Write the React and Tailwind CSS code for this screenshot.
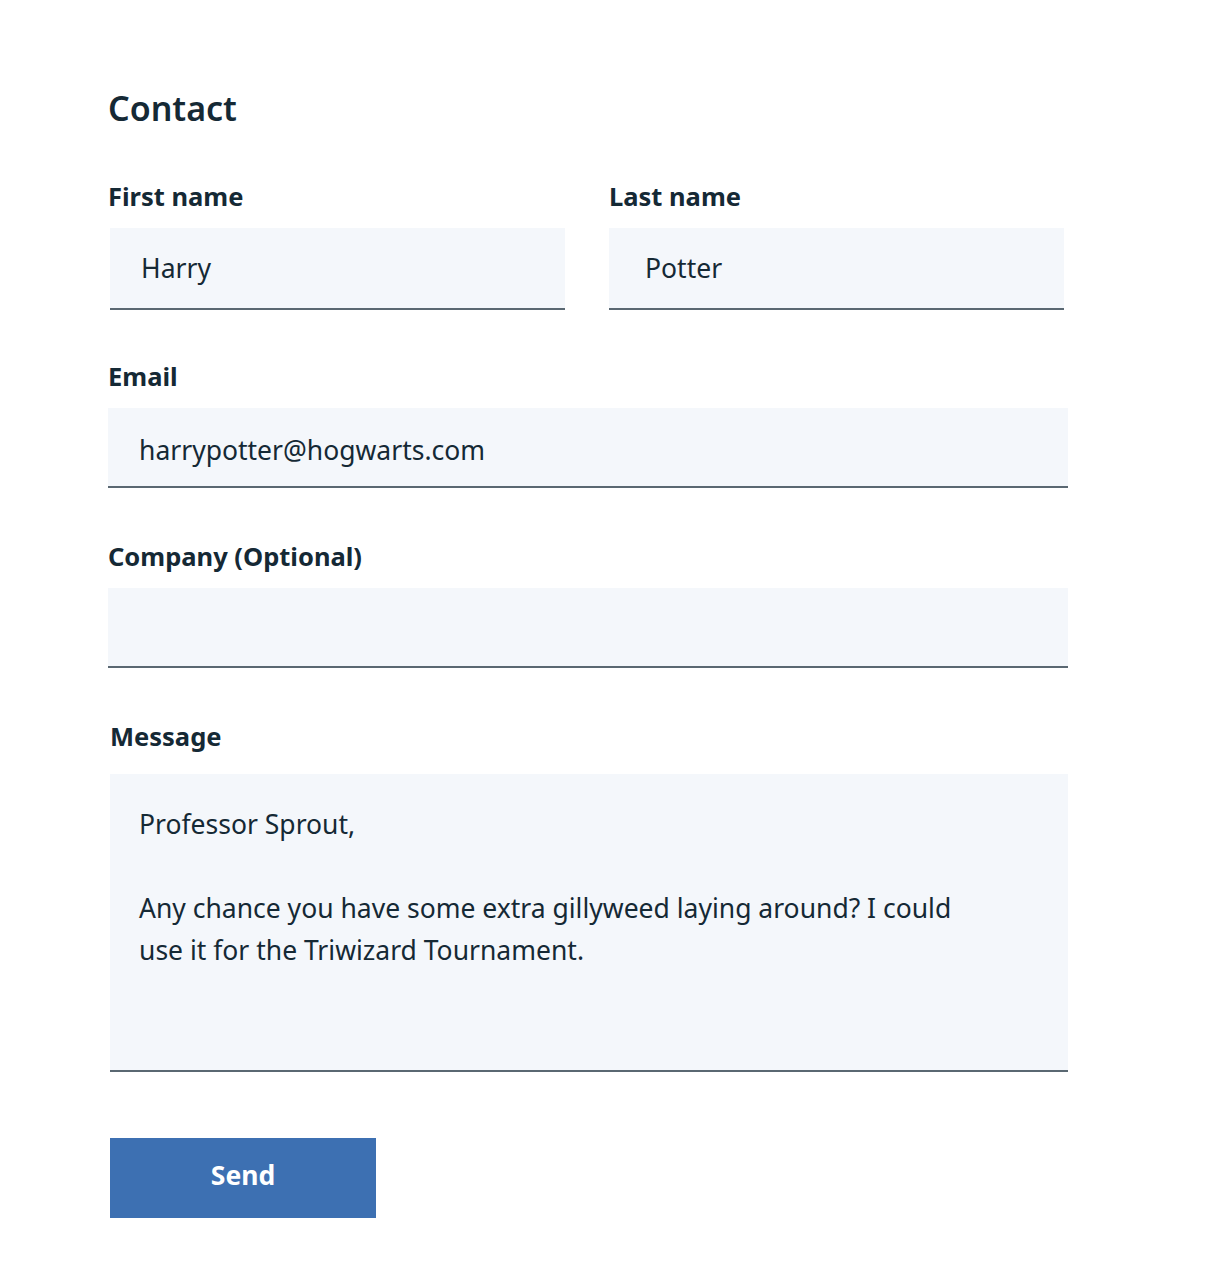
import { useState } from "react";

const font = { fontFamily: '"Noto Sans", "Open Sans", sans-serif' };

function Field({ label, value, className = "", inputClass = "h-20" }) {
  return (
    <div className={className}>
      <label className="block h-8 text-[25.5px] leading-8 font-bold text-[#152935]">{label}</label>
      <input
        className={`mt-4 block w-full border-b-2 border-[#5a6872] bg-[#f4f7fb] px-[31px] text-[26.5px] text-[#152935] outline-none ${inputClass}`}
        defaultValue={value}
      />
    </div>
  );
}

export default function App() {
  const [message] = useState(
    "Professor Sprout,\n\nAny chance you have some extra gillyweed laying around? I could use it for the Triwizard Tournament."
  );

  return (
    <div className="min-h-[1282px] bg-white pl-[108px] pt-[88px]" style={font}>
      <h1 className="h-10 text-[34px] leading-10 font-semibold text-[#152935]">Contact</h1>

      <div className="mt-[52px] grid w-[956px] grid-cols-2 gap-[46px]">
        <Field label="First name" value="Harry" inputClass="ml-[2px] h-[82px] px-[29px]" />
        <Field label="Last name" value="Potter" inputClass="h-[82px] px-[36px]" />
      </div>

      <Field className="mt-[50px] w-[960px]" label="Email" value="harrypotter@hogwarts.com" inputClass="h-20 pt-[5px]" />
      <Field className="mt-[52px] w-[960px]" label="Company (Optional)" value="" />

      <div className="mt-[52px] ml-[2px] w-[958px]">
        <label className="block h-8 text-[25.5px] leading-8 font-bold text-[#152935]">Message</label>
        <textarea
          className="mt-[22px] block h-[298px] w-full resize-none border-b-2 border-[#5a6872] bg-[#f4f7fb] pt-[29px] pr-[90px] pl-[29px] text-[26.5px] leading-[42px] text-[#152935] outline-none"
          defaultValue={message}
        />
      </div>

      <button className="mt-[66px] ml-[2px] h-20 w-[266px] bg-[#3d70b2] pb-1 text-[26.5px] font-bold text-white">
        Send
      </button>
    </div>
  );
}
